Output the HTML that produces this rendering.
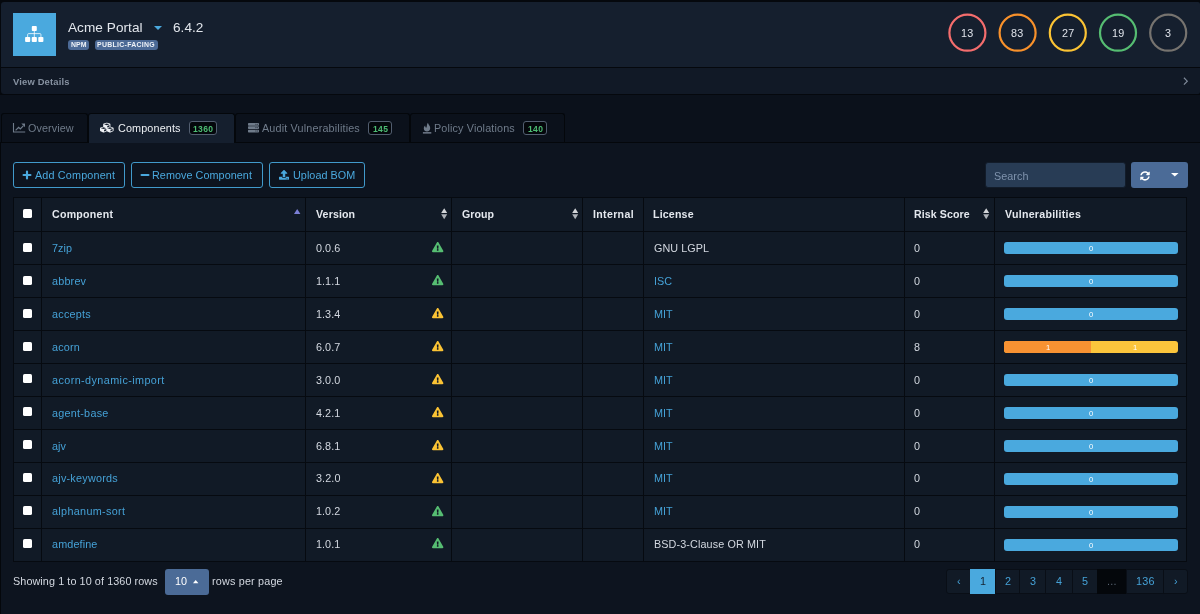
<!DOCTYPE html>
<html lang="en">
<head>
<meta charset="utf-8">
<title>Acme Portal - Components</title>
<style>
*{box-sizing:border-box;margin:0;padding:0}
html,body{width:1200px;height:614px;overflow:hidden}
body{background:#0b111b;font-family:"Liberation Sans",sans-serif;color:#d3d8e0;font-size:10.8px;position:relative}
.abs,.tx,.bx{position:absolute}
.tx{white-space:nowrap;display:block;will-change:transform}
svg{position:absolute;overflow:visible}
.tag{position:absolute;top:40px;height:10px;border-radius:3px;background:#4c6a96}
.circ{position:absolute;top:13px;width:38px;height:38px;border-radius:50%;border:2px solid #777}
.tab{position:absolute;top:113px;height:29px;border:1px solid #04070b;border-bottom:0;border-radius:3px 3px 0 0;background:#0b111b}
.tab.act{background:#151f2e;height:30px}
.tbadge{position:absolute;top:121px;height:14px;border:1px solid #525e70;border-radius:3px;background:#04070b}
.btn{position:absolute;top:162px;height:26px;border:1px solid #419acb;border-radius:3px}
.row{position:absolute;left:14px;width:1173px;height:1px;background:#060a10}
.col{position:absolute;top:197px;width:1px;height:365px;background:#060a10}
.cb{position:absolute;left:23px;width:9px;height:9px;background:#fff;border-radius:1.6px}
.bar{position:absolute;left:1004px;width:174px;height:12px;border-radius:3px;background:#4aa9de;overflow:hidden}
.pg{position:absolute;top:569px;height:25px;background:#111a26;border:1px solid #090e16}
</style>
</head>
<body>

<div class="bx" style="left:0;top:0;width:1200px;height:95px;background:#05080d"></div>
<div class="bx" style="left:1px;top:2px;width:1199px;height:65px;background:#151f2e;border-radius:3px 2px 0 0"></div>
<div class="bx" style="left:1px;top:68px;width:1199px;height:26px;background:#111926;border-radius:0 0 2px 3px"></div>
<div class="bx" style="left:13px;top:13px;width:43px;height:43px;background:#4aa9de"></div>
<svg style="left:0;top:0" width="60" height="60" viewBox="0 0 60 60">
<g fill="#fff"><rect x="31.8" y="26" width="5" height="5" rx=".9"/><rect x="25.1" y="36.9" width="5.1" height="5.1" rx=".9"/><rect x="31.75" y="36.9" width="5.1" height="5.1" rx=".9"/><rect x="38.3" y="36.9" width="5.1" height="5.1" rx=".9"/></g>
<path d="M34.3 31v6M27.65 37v-2.400q0-1 1-1h11.300q1 0 1 1v2.400" fill="none" stroke="#fff" stroke-opacity=".85" stroke-width=".9"/>
</svg>
<span class="tx" style="left:68.00px;top:19px;font-size:13.6px;line-height:17px;letter-spacing:0.05px;color:#e2e6ec;">Acme Portal</span>
<div class="bx" style="left:153.600px;top:25.500px;width:0;height:0;border-left:4.200px solid transparent;border-right:4.200px solid transparent;border-top:4.800px solid #4aa9de"></div>
<span class="tx" style="left:173.00px;top:19px;font-size:13.6px;line-height:17px;letter-spacing:0.05px;color:#e2e6ec;">6.4.2</span>
<div class="tag" style="left:68px;width:21px"></div>
<div class="tag" style="left:95px;width:63px"></div>
<span class="tx" style="left:71.00px;top:40px;font-size:6.9px;line-height:10.4px;letter-spacing:0.134px;font-weight:bold;color:#eef2f7;">NPM</span>
<span class="tx" style="left:97.40px;top:40px;font-size:6.9px;line-height:10.4px;letter-spacing:0.313px;font-weight:bold;color:#eef2f7;">PUBLIC-FACING</span>
<svg style="left:0;top:0" width="1200" height="60"><circle cx="967.4" cy="32.700" r="18" fill="none" stroke="#f46d6d" stroke-width="2.200"/></svg>
<span class="tx" style="left:961.19px;top:26px;font-size:10.8px;line-height:14px;letter-spacing:0.2px;color:#dfe3ea;">13</span>
<svg style="left:0;top:0" width="1200" height="60"><circle cx="1017.6" cy="32.700" r="18" fill="none" stroke="#f8912b" stroke-width="2.200"/></svg>
<span class="tx" style="left:1011.39px;top:26px;font-size:10.8px;line-height:14px;letter-spacing:0.2px;color:#dfe3ea;">83</span>
<svg style="left:0;top:0" width="1200" height="60"><circle cx="1067.8" cy="32.700" r="18" fill="none" stroke="#fbc334" stroke-width="2.200"/></svg>
<span class="tx" style="left:1061.59px;top:26px;font-size:10.8px;line-height:14px;letter-spacing:0.2px;color:#dfe3ea;">27</span>
<svg style="left:0;top:0" width="1200" height="60"><circle cx="1118.0" cy="32.700" r="18" fill="none" stroke="#56bd72" stroke-width="2.200"/></svg>
<span class="tx" style="left:1111.79px;top:26px;font-size:10.8px;line-height:14px;letter-spacing:0.2px;color:#dfe3ea;">19</span>
<svg style="left:0;top:0" width="1200" height="60"><circle cx="1168.2" cy="32.700" r="18" fill="none" stroke="#76736f" stroke-width="2.200"/></svg>
<span class="tx" style="left:1165.10px;top:26px;font-size:10.8px;line-height:14px;letter-spacing:0.05px;color:#dfe3ea;">3</span>
<span class="tx" style="left:13.40px;top:75px;font-size:9.4px;line-height:13px;letter-spacing:0.174px;font-weight:bold;color:#8792a1;">View Details</span>
<svg style="left:1182.800px;top:77.400px" width="5.600" height="8.400" viewBox="0 0 6 9"><path d="M1 0.800 L4.600 4.500 L1 8.200" fill="none" stroke="#7f8a99" stroke-width="1.250"/></svg>
<div class="bx" style="left:0;top:142px;width:1200px;height:1px;background:#04070b"></div>
<div class="bx" style="left:0;top:143px;width:1200px;height:471px;background:#0d141f"></div>
<div class="bx" style="left:0;top:143px;width:1px;height:471px;background:#04070b"></div>
<div class="tab" style="left:1px;width:87px"></div>
<div class="tab act" style="left:88px;width:147px"></div>
<div class="tab" style="left:235px;width:175px"></div>
<div class="tab" style="left:410px;width:155px"></div>
<svg style="left:0;top:0" width="40" height="140" viewBox="0 0 40 140"><path d="M13.500 123v9h11.700" fill="none" stroke="#6f7b8a" stroke-width="1.100"/><path d="M15.600 130.300l3-3 1.700 1.700 3-3.200" fill="none" stroke="#6f7b8a" stroke-width="1.200"/><path d="M21.300 123.500h3.700v3.700z" fill="#6f7b8a"/></svg>
<span class="tx" style="left:28.40px;top:121px;font-size:10.8px;line-height:14px;letter-spacing:0.084px;color:#6f7b8a;">Overview</span>
<span class="tx" style="left:117.50px;top:121px;font-size:10.8px;line-height:14px;letter-spacing:0.141px;color:#eef1f5;">Components</span>
<span class="tx" style="left:262.20px;top:121px;font-size:10.8px;line-height:14px;letter-spacing:0.167px;color:#6f7b8a;">Audit Vulnerabilities</span>
<span class="tx" style="left:434.30px;top:121px;font-size:10.8px;line-height:14px;letter-spacing:0.141px;color:#6f7b8a;">Policy Violations</span>
<div class="tbadge" style="left:189px;width:28px"></div>
<span class="tx" style="left:192.98px;top:122.6px;font-size:8.5px;line-height:12.6px;letter-spacing:0.376px;font-weight:bold;color:#4dbd74;">1360</span>
<div class="tbadge" style="left:368px;width:24px"></div>
<span class="tx" style="left:372.54px;top:122.6px;font-size:8.5px;line-height:12.6px;letter-spacing:0.367px;font-weight:bold;color:#4dbd74;">145</span>
<div class="tbadge" style="left:523px;width:24px"></div>
<span class="tx" style="left:527.54px;top:122.6px;font-size:8.5px;line-height:12.6px;letter-spacing:0.367px;font-weight:bold;color:#4dbd74;">140</span>
<svg style="left:100px;top:122.400px" width="13.600" height="11.200" viewBox="0 0 512 512" preserveAspectRatio="none"><path fill="#eef1f5" d="M488.600 250.200L392 214V105.500c0-15-9.300-28.400-23.400-33.700l-100-37.500c-8.100-3.100-17.100-3.100-25.300 0l-100 37.500c-14.100 5.300-23.400 18.700-23.400 33.700V214l-96.600 36.200C9.300 255.500 0 268.900 0 283.900V394c0 13.600 7.700 26.100 19.900 32.200l100 50c10.100 5.100 22.100 5.100 32.200 0l103.900-52 103.900 52c10.100 5.100 22.100 5.100 32.200 0l100-50c12.200-6.100 19.900-18.600 19.900-32.200V283.900c0-15-9.300-28.400-23.400-33.700zM358 214.800l-85 31.900v-68.200l85-37v73.300zM154 104.100l102-38.200 102 38.200v.6l-102 41.400-102-41.400v-.6zm84 291.100l-85 42.500v-79.100l85-38.800v75.400zm0-112l-102 41.400-102-41.400v-.6l102-38.200 102 38.200v.6zm240 112l-85 42.500v-79.100l85-38.800v75.400zm0-112l-102 41.400-102-41.400v-.6l102-38.200 102 38.200v.6z"/></svg>
<svg style="left:248px;top:123px" width="11" height="9.400" viewBox="0 0 512 448" preserveAspectRatio="none"><path fill="#6f7b8a" d="M480 128H32c-17.670 0-32-14.330-32-32V32C0 14.330 14.330 0 32 0h448c17.670 0 32 14.330 32 32v64c0 17.670-14.330 32-32 32zm-48-88c-13.250 0-24 10.740-24 24 0 13.250 10.750 24 24 24s24-10.750 24-24c0-13.260-10.750-24-24-24zm-64 0c-13.250 0-24 10.740-24 24 0 13.250 10.750 24 24 24s24-10.750 24-24c0-13.260-10.750-24-24-24zm112 248H32c-17.670 0-32-14.330-32-32v-64c0-17.670 14.330-32 32-32h448c17.670 0 32 14.330 32 32v64c0 17.670-14.330 32-32 32zm-48-88c-13.250 0-24 10.740-24 24 0 13.250 10.750 24 24 24s24-10.750 24-24c0-13.260-10.750-24-24-24zm-64 0c-13.250 0-24 10.740-24 24 0 13.250 10.750 24 24 24s24-10.750 24-24c0-13.260-10.750-24-24-24zm112 248H32c-17.670 0-32-14.330-32-32v-64c0-17.670 14.330-32 32-32h448c17.670 0 32 14.330 32 32v64c0 17.670-14.330 32-32 32zm-48-88c-13.250 0-24 10.740-24 24 0 13.250 10.750 24 24 24s24-10.750 24-24c0-13.260-10.750-24-24-24zm-64 0c-13.250 0-24 10.740-24 24 0 13.250 10.750 24 24 24s24-10.750 24-24c0-13.260-10.750-24-24-24z"/></svg>
<svg style="left:0;top:0" width="440" height="140" viewBox="0 0 440 140"><path fill="#6f7b8a" d="M427.900 122.800c.500 2.100 2.600 3.300 2.300 5.700c-.200 1.800-1.500 3-3.200 3c-1.800 0-3.200-1.300-3.200-3.100c0-1.200.600-2.100 1.400-2.900c0 1.100.300 1.900 1.100 2.200c1-1.200.200-3.300 1.600-4.900z"/><rect x="422.900" y="132.100" width="8.400" height="1.500" fill="#6f7b8a"/></svg>
<div class="btn" style="left:13px;width:112px"></div>
<div class="btn" style="left:131px;width:132px"></div>
<div class="btn" style="left:269px;width:96px"></div>
<svg style="left:23px;top:170.800px" width="8" height="8" viewBox="0 0 10 10"><path d="M5 0.700v8.600M0.700 5h8.600" stroke="#4aa9de" stroke-width="2.700" stroke-linecap="round"/></svg>
<span class="tx" style="left:34.60px;top:168px;font-size:10.8px;line-height:14px;letter-spacing:0.162px;color:#4aa9de;">Add Component</span>
<svg style="left:140.800px;top:170.800px" width="8" height="8" viewBox="0 0 10 10"><path d="M0.700 5h8.600" stroke="#4aa9de" stroke-width="2.700" stroke-linecap="round"/></svg>
<span class="tx" style="left:152.40px;top:168px;font-size:10.8px;line-height:14px;letter-spacing:0.057px;color:#4aa9de;">Remove Component</span>
<svg style="left:279px;top:170px" width="10" height="9.800" viewBox="0 0 512 512" preserveAspectRatio="none"><path fill="#4aa9de" d="M296 384h-80c-13.300 0-24-10.700-24-24V192h-87.700c-17.800 0-26.700-21.500-14.100-34.100L242.300 5.700c7.500-7.500 19.800-7.500 27.300 0l152.200 152.200c12.600 12.600 3.700 34.100-14.100 34.100H320v168c0 13.300-10.700 24-24 24zm216-8v112c0 13.300-10.700 24-24 24H24c-13.300 0-24-10.700-24-24V376c0-13.300 10.700-24 24-24h136v8c0 30.900 25.100 56 56 56h80c30.900 0 56-25.100 56-56v-8h136c13.300 0 24 10.700 24 24zm-124 88c0-11-9-20-20-20s-20 9-20 20 9 20 20 20 20-9 20-20zm64 0c0-11-9-20-20-20s-20 9-20 20 9 20 20 20 20-9 20-20z"/></svg>
<span class="tx" style="left:292.70px;top:168px;font-size:10.8px;line-height:14px;letter-spacing:0.05px;color:#4aa9de;">Upload BOM</span>
<div class="bx" style="left:985px;top:162px;width:141px;height:26px;background:#283c55;border:1px solid #121c2a;border-radius:3px"></div>
<span class="tx" style="left:994.30px;top:169px;font-size:10.8px;line-height:14px;letter-spacing:0.05px;color:#7f93ad;">Search</span>
<div class="bx" style="left:1131px;top:162px;width:57px;height:26px;background:#4b6b97;border-radius:3px"></div>
<svg style="left:1140.200px;top:170.600px" width="10" height="9.800" viewBox="0 0 512 512"><path fill="#fff" d="M370.720 133.280C339.458 104.008 298.888 87.962 255.848 88c-77.458.068-144.328 53.178-162.791 126.850-1.344 5.363-6.122 9.150-11.651 9.150H24.103c-7.498 0-13.194-6.807-11.807-14.176C33.933 94.924 134.813 8 256 8c66.448 0 126.791 26.136 171.315 68.685L463.030 40.970C478.149 25.851 504 36.559 504 57.941V192c0 13.255-10.745 24-24 24H345.941c-21.382 0-32.090-25.851-16.971-40.971l41.750-41.749zM32 296h134.059c21.382 0 32.090 25.851 16.971 40.971l-41.750 41.750c31.262 29.273 71.835 45.319 114.876 45.280 77.418-.07 144.315-53.144 162.787-126.849 1.344-5.363 6.122-9.150 11.651-9.150h57.304c7.498 0 13.194 6.807 11.807 14.176C478.067 417.076 377.187 504 256 504c-66.448 0-126.791-26.136-171.315-68.685L48.970 471.030C33.851 486.149 8 475.441 8 454.059V320c0-13.255 10.745-24 24-24z"/></svg>
<svg style="left:1170.800px;top:173px" width="7.600" height="3.600" viewBox="0 0 76 36"><path d="M0 0H76L38 36Z" fill="#fff"/></svg>
<div class="bx" style="left:13px;top:197px;width:1174px;height:365px;background:#111a26"></div>
<div class="row" style="top:197px;left:13px;width:1174px"></div>
<div class="row" style="top:231px;left:13px;width:1174px"></div>
<div class="row" style="top:264px;left:13px;width:1174px"></div>
<div class="row" style="top:297px;left:13px;width:1174px"></div>
<div class="row" style="top:330px;left:13px;width:1174px"></div>
<div class="row" style="top:363px;left:13px;width:1174px"></div>
<div class="row" style="top:396px;left:13px;width:1174px"></div>
<div class="row" style="top:429px;left:13px;width:1174px"></div>
<div class="row" style="top:462px;left:13px;width:1174px"></div>
<div class="row" style="top:495px;left:13px;width:1174px"></div>
<div class="row" style="top:528px;left:13px;width:1174px"></div>
<div class="row" style="top:561px;left:13px;width:1174px"></div>
<div class="col" style="left:13px"></div>
<div class="col" style="left:41px"></div>
<div class="col" style="left:305px"></div>
<div class="col" style="left:451px"></div>
<div class="col" style="left:582px"></div>
<div class="col" style="left:643px"></div>
<div class="col" style="left:904px"></div>
<div class="col" style="left:994px"></div>
<div class="col" style="left:1186px"></div>
<span class="tx" style="left:52.00px;top:207px;font-size:10.6px;line-height:14px;letter-spacing:0.265px;font-weight:bold;color:#e4e8ee;">Component</span>
<span class="tx" style="left:315.50px;top:207px;font-size:10.6px;line-height:14px;letter-spacing:0.134px;font-weight:bold;color:#e4e8ee;">Version</span>
<span class="tx" style="left:461.70px;top:207px;font-size:10.6px;line-height:14px;letter-spacing:0.051px;font-weight:bold;color:#e4e8ee;">Group</span>
<span class="tx" style="left:592.70px;top:207px;font-size:10.6px;line-height:14px;letter-spacing:0.331px;font-weight:bold;color:#e4e8ee;">Internal</span>
<span class="tx" style="left:653.40px;top:207px;font-size:10.6px;line-height:14px;letter-spacing:0.187px;font-weight:bold;color:#e4e8ee;">License</span>
<span class="tx" style="left:914.30px;top:207px;font-size:10.6px;line-height:14px;letter-spacing:0.1px;font-weight:bold;color:#e4e8ee;">Risk Score</span>
<span class="tx" style="left:1004.70px;top:207px;font-size:10.6px;line-height:14px;letter-spacing:0.274px;font-weight:bold;color:#e4e8ee;">Vulnerabilities</span>
<div class="cb" style="top:209px"></div>
<svg style="left:294.400px;top:208.600px" width="6.400" height="5" viewBox="0 0 64 50"><path d="M0 50L32 0L64 50Z" fill="#7b7fd6"/></svg>
<svg style="left:440.6px;top:208px" width="6.400" height="11.400" viewBox="0 0 64 114"><path d="M2 50L32 2L62 50Z" fill="#d2d4d8"/><path d="M2 63L32 112L62 63Z" fill="#aeb2b8"/></svg>
<svg style="left:571.8px;top:208px" width="6.400" height="11.400" viewBox="0 0 64 114"><path d="M2 50L32 2L62 50Z" fill="#d2d4d8"/><path d="M2 63L32 112L62 63Z" fill="#aeb2b8"/></svg>
<svg style="left:983.4px;top:208px" width="6.400" height="11.400" viewBox="0 0 64 114"><path d="M2 50L32 2L62 50Z" fill="#d2d4d8"/><path d="M2 63L32 112L62 63Z" fill="#aeb2b8"/></svg>
<div class="cb" style="top:243px"></div>
<span class="tx" style="left:52.00px;top:241px;font-size:10.8px;line-height:14px;letter-spacing:0.063px;color:#45a1d6;">7zip</span>
<span class="tx" style="left:315.60px;top:241px;font-size:10.8px;line-height:14px;letter-spacing:0.05px;color:#d3d8e0;">0.0.6</span>
<svg style="left:432px;top:242.3px" width="11.400" height="10.200" viewBox="0 0 576 512" preserveAspectRatio="none"><path fill="#56bd72" d="M569.517 440.013C587.975 472.007 564.806 512 527.940 512H48.054c-36.937 0-59.999-40.055-41.577-71.987L246.423 23.985c18.467-32.009 64.720-31.951 83.154 0l239.940 416.028zM288 354c-25.405 0-46 20.595-46 46s20.595 46 46 46 46-20.595 46-46-20.595-46-46-46zm-43.673-165.346l7.418 136c.347 6.364 5.609 11.346 11.982 11.346h48.546c6.373 0 11.635-4.982 11.982-11.346l7.418-136c.375-6.874-5.098-12.654-11.982-12.654h-63.383c-6.884 0-12.356 5.780-11.981 12.654z"/></svg>
<span class="tx" style="left:653.50px;top:241px;font-size:10.8px;line-height:14px;letter-spacing:0.05px;color:#d3d8e0;">GNU LGPL</span>
<span class="tx" style="left:914.30px;top:241px;font-size:10.8px;line-height:14px;letter-spacing:0.05px;color:#d3d8e0;">0</span>
<div class="bar" style="top:242px"></div>
<span class="tx" style="left:1088.60px;top:242.7px;font-size:7.6px;line-height:12px;letter-spacing:0.05px;color:#fff;">0</span>
<div class="cb" style="top:276px"></div>
<span class="tx" style="left:52.00px;top:274px;font-size:10.8px;line-height:14px;letter-spacing:0.196px;color:#45a1d6;">abbrev</span>
<span class="tx" style="left:315.60px;top:274px;font-size:10.8px;line-height:14px;letter-spacing:0.05px;color:#d3d8e0;">1.1.1</span>
<svg style="left:432px;top:275.2px" width="11.400" height="10.200" viewBox="0 0 576 512" preserveAspectRatio="none"><path fill="#56bd72" d="M569.517 440.013C587.975 472.007 564.806 512 527.940 512H48.054c-36.937 0-59.999-40.055-41.577-71.987L246.423 23.985c18.467-32.009 64.720-31.951 83.154 0l239.940 416.028zM288 354c-25.405 0-46 20.595-46 46s20.595 46 46 46 46-20.595 46-46-20.595-46-46-46zm-43.673-165.346l7.418 136c.347 6.364 5.609 11.346 11.982 11.346h48.546c6.373 0 11.635-4.982 11.982-11.346l7.418-136c.375-6.874-5.098-12.654-11.982-12.654h-63.383c-6.884 0-12.356 5.780-11.981 12.654z"/></svg>
<span class="tx" style="left:653.50px;top:274px;font-size:10.8px;line-height:14px;letter-spacing:0.05px;color:#45a1d6;">ISC</span>
<span class="tx" style="left:914.30px;top:274px;font-size:10.8px;line-height:14px;letter-spacing:0.05px;color:#d3d8e0;">0</span>
<div class="bar" style="top:275px"></div>
<span class="tx" style="left:1088.60px;top:275.7px;font-size:7.6px;line-height:12px;letter-spacing:0.05px;color:#fff;">0</span>
<div class="cb" style="top:309px"></div>
<span class="tx" style="left:52.00px;top:307px;font-size:10.8px;line-height:14px;letter-spacing:0.247px;color:#45a1d6;">accepts</span>
<span class="tx" style="left:315.60px;top:307px;font-size:10.8px;line-height:14px;letter-spacing:0.05px;color:#d3d8e0;">1.3.4</span>
<svg style="left:432px;top:308.1px" width="11.400" height="10.200" viewBox="0 0 576 512" preserveAspectRatio="none"><path fill="#fbc334" d="M569.517 440.013C587.975 472.007 564.806 512 527.940 512H48.054c-36.937 0-59.999-40.055-41.577-71.987L246.423 23.985c18.467-32.009 64.720-31.951 83.154 0l239.940 416.028zM288 354c-25.405 0-46 20.595-46 46s20.595 46 46 46 46-20.595 46-46-20.595-46-46-46zm-43.673-165.346l7.418 136c.347 6.364 5.609 11.346 11.982 11.346h48.546c6.373 0 11.635-4.982 11.982-11.346l7.418-136c.375-6.874-5.098-12.654-11.982-12.654h-63.383c-6.884 0-12.356 5.780-11.981 12.654z"/></svg>
<span class="tx" style="left:653.50px;top:307px;font-size:10.8px;line-height:14px;letter-spacing:0.05px;color:#45a1d6;">MIT</span>
<span class="tx" style="left:914.30px;top:307px;font-size:10.8px;line-height:14px;letter-spacing:0.05px;color:#d3d8e0;">0</span>
<div class="bar" style="top:308px"></div>
<span class="tx" style="left:1088.60px;top:308.7px;font-size:7.6px;line-height:12px;letter-spacing:0.05px;color:#fff;">0</span>
<div class="cb" style="top:342px"></div>
<span class="tx" style="left:52.00px;top:340px;font-size:10.8px;line-height:14px;letter-spacing:0.171px;color:#45a1d6;">acorn</span>
<span class="tx" style="left:315.60px;top:340px;font-size:10.8px;line-height:14px;letter-spacing:0.05px;color:#d3d8e0;">6.0.7</span>
<svg style="left:432px;top:341.0px" width="11.400" height="10.200" viewBox="0 0 576 512" preserveAspectRatio="none"><path fill="#fbc334" d="M569.517 440.013C587.975 472.007 564.806 512 527.940 512H48.054c-36.937 0-59.999-40.055-41.577-71.987L246.423 23.985c18.467-32.009 64.720-31.951 83.154 0l239.940 416.028zM288 354c-25.405 0-46 20.595-46 46s20.595 46 46 46 46-20.595 46-46-20.595-46-46-46zm-43.673-165.346l7.418 136c.347 6.364 5.609 11.346 11.982 11.346h48.546c6.373 0 11.635-4.982 11.982-11.346l7.418-136c.375-6.874-5.098-12.654-11.982-12.654h-63.383c-6.884 0-12.356 5.780-11.981 12.654z"/></svg>
<span class="tx" style="left:653.50px;top:340px;font-size:10.8px;line-height:14px;letter-spacing:0.05px;color:#45a1d6;">MIT</span>
<span class="tx" style="left:914.30px;top:340px;font-size:10.8px;line-height:14px;letter-spacing:0.05px;color:#d3d8e0;">8</span>
<div class="bar" style="top:341px;background:#fbc53c"><div class="bx" style="left:0;top:0;width:87px;height:12px;background:#f89232"></div></div>
<span class="tx" style="left:1046.00px;top:341.7px;font-size:7.6px;line-height:12px;letter-spacing:0.05px;color:#fff;">1</span>
<span class="tx" style="left:1132.60px;top:341.7px;font-size:7.6px;line-height:12px;letter-spacing:0.05px;color:#fff;">1</span>
<div class="cb" style="top:374px"></div>
<span class="tx" style="left:52.00px;top:373px;font-size:10.8px;line-height:14px;letter-spacing:0.414px;color:#45a1d6;">acorn-dynamic-import</span>
<span class="tx" style="left:315.60px;top:373px;font-size:10.8px;line-height:14px;letter-spacing:0.05px;color:#d3d8e0;">3.0.0</span>
<svg style="left:432px;top:373.9px" width="11.400" height="10.200" viewBox="0 0 576 512" preserveAspectRatio="none"><path fill="#fbc334" d="M569.517 440.013C587.975 472.007 564.806 512 527.940 512H48.054c-36.937 0-59.999-40.055-41.577-71.987L246.423 23.985c18.467-32.009 64.720-31.951 83.154 0l239.940 416.028zM288 354c-25.405 0-46 20.595-46 46s20.595 46 46 46 46-20.595 46-46-20.595-46-46-46zm-43.673-165.346l7.418 136c.347 6.364 5.609 11.346 11.982 11.346h48.546c6.373 0 11.635-4.982 11.982-11.346l7.418-136c.375-6.874-5.098-12.654-11.982-12.654h-63.383c-6.884 0-12.356 5.780-11.981 12.654z"/></svg>
<span class="tx" style="left:653.50px;top:373px;font-size:10.8px;line-height:14px;letter-spacing:0.05px;color:#45a1d6;">MIT</span>
<span class="tx" style="left:914.30px;top:373px;font-size:10.8px;line-height:14px;letter-spacing:0.05px;color:#d3d8e0;">0</span>
<div class="bar" style="top:374px"></div>
<span class="tx" style="left:1088.60px;top:374.7px;font-size:7.6px;line-height:12px;letter-spacing:0.05px;color:#fff;">0</span>
<div class="cb" style="top:407px"></div>
<span class="tx" style="left:52.00px;top:406px;font-size:10.8px;line-height:14px;letter-spacing:0.251px;color:#45a1d6;">agent-base</span>
<span class="tx" style="left:315.60px;top:406px;font-size:10.8px;line-height:14px;letter-spacing:0.05px;color:#d3d8e0;">4.2.1</span>
<svg style="left:432px;top:406.8px" width="11.400" height="10.200" viewBox="0 0 576 512" preserveAspectRatio="none"><path fill="#fbc334" d="M569.517 440.013C587.975 472.007 564.806 512 527.940 512H48.054c-36.937 0-59.999-40.055-41.577-71.987L246.423 23.985c18.467-32.009 64.720-31.951 83.154 0l239.940 416.028zM288 354c-25.405 0-46 20.595-46 46s20.595 46 46 46 46-20.595 46-46-20.595-46-46-46zm-43.673-165.346l7.418 136c.347 6.364 5.609 11.346 11.982 11.346h48.546c6.373 0 11.635-4.982 11.982-11.346l7.418-136c.375-6.874-5.098-12.654-11.982-12.654h-63.383c-6.884 0-12.356 5.780-11.981 12.654z"/></svg>
<span class="tx" style="left:653.50px;top:406px;font-size:10.8px;line-height:14px;letter-spacing:0.05px;color:#45a1d6;">MIT</span>
<span class="tx" style="left:914.30px;top:406px;font-size:10.8px;line-height:14px;letter-spacing:0.05px;color:#d3d8e0;">0</span>
<div class="bar" style="top:407px"></div>
<span class="tx" style="left:1088.60px;top:407.7px;font-size:7.6px;line-height:12px;letter-spacing:0.05px;color:#fff;">0</span>
<div class="cb" style="top:440px"></div>
<span class="tx" style="left:52.00px;top:439px;font-size:10.8px;line-height:14px;letter-spacing:0.05px;color:#45a1d6;">ajv</span>
<span class="tx" style="left:315.60px;top:439px;font-size:10.8px;line-height:14px;letter-spacing:0.05px;color:#d3d8e0;">6.8.1</span>
<svg style="left:432px;top:439.7px" width="11.400" height="10.200" viewBox="0 0 576 512" preserveAspectRatio="none"><path fill="#fbc334" d="M569.517 440.013C587.975 472.007 564.806 512 527.940 512H48.054c-36.937 0-59.999-40.055-41.577-71.987L246.423 23.985c18.467-32.009 64.720-31.951 83.154 0l239.940 416.028zM288 354c-25.405 0-46 20.595-46 46s20.595 46 46 46 46-20.595 46-46-20.595-46-46-46zm-43.673-165.346l7.418 136c.347 6.364 5.609 11.346 11.982 11.346h48.546c6.373 0 11.635-4.982 11.982-11.346l7.418-136c.375-6.874-5.098-12.654-11.982-12.654h-63.383c-6.884 0-12.356 5.780-11.981 12.654z"/></svg>
<span class="tx" style="left:653.50px;top:439px;font-size:10.8px;line-height:14px;letter-spacing:0.05px;color:#45a1d6;">MIT</span>
<span class="tx" style="left:914.30px;top:439px;font-size:10.8px;line-height:14px;letter-spacing:0.05px;color:#d3d8e0;">0</span>
<div class="bar" style="top:440px"></div>
<span class="tx" style="left:1088.60px;top:440.7px;font-size:7.6px;line-height:12px;letter-spacing:0.05px;color:#fff;">0</span>
<div class="cb" style="top:473px"></div>
<span class="tx" style="left:52.00px;top:471px;font-size:10.8px;line-height:14px;letter-spacing:0.244px;color:#45a1d6;">ajv-keywords</span>
<span class="tx" style="left:315.60px;top:471px;font-size:10.8px;line-height:14px;letter-spacing:0.095px;color:#d3d8e0;">3.2.0</span>
<svg style="left:432px;top:472.6px" width="11.400" height="10.200" viewBox="0 0 576 512" preserveAspectRatio="none"><path fill="#fbc334" d="M569.517 440.013C587.975 472.007 564.806 512 527.940 512H48.054c-36.937 0-59.999-40.055-41.577-71.987L246.423 23.985c18.467-32.009 64.720-31.951 83.154 0l239.940 416.028zM288 354c-25.405 0-46 20.595-46 46s20.595 46 46 46 46-20.595 46-46-20.595-46-46-46zm-43.673-165.346l7.418 136c.347 6.364 5.609 11.346 11.982 11.346h48.546c6.373 0 11.635-4.982 11.982-11.346l7.418-136c.375-6.874-5.098-12.654-11.982-12.654h-63.383c-6.884 0-12.356 5.780-11.981 12.654z"/></svg>
<span class="tx" style="left:653.50px;top:471px;font-size:10.8px;line-height:14px;letter-spacing:0.05px;color:#45a1d6;">MIT</span>
<span class="tx" style="left:914.30px;top:471px;font-size:10.8px;line-height:14px;letter-spacing:0.05px;color:#d3d8e0;">0</span>
<div class="bar" style="top:473px"></div>
<span class="tx" style="left:1088.60px;top:473.7px;font-size:7.6px;line-height:12px;letter-spacing:0.05px;color:#fff;">0</span>
<div class="cb" style="top:506px"></div>
<span class="tx" style="left:52.00px;top:504px;font-size:10.8px;line-height:14px;letter-spacing:0.33px;color:#45a1d6;">alphanum-sort</span>
<span class="tx" style="left:315.60px;top:504px;font-size:10.8px;line-height:14px;letter-spacing:0.05px;color:#d3d8e0;">1.0.2</span>
<svg style="left:432px;top:505.5px" width="11.400" height="10.200" viewBox="0 0 576 512" preserveAspectRatio="none"><path fill="#56bd72" d="M569.517 440.013C587.975 472.007 564.806 512 527.940 512H48.054c-36.937 0-59.999-40.055-41.577-71.987L246.423 23.985c18.467-32.009 64.720-31.951 83.154 0l239.940 416.028zM288 354c-25.405 0-46 20.595-46 46s20.595 46 46 46 46-20.595 46-46-20.595-46-46-46zm-43.673-165.346l7.418 136c.347 6.364 5.609 11.346 11.982 11.346h48.546c6.373 0 11.635-4.982 11.982-11.346l7.418-136c.375-6.874-5.098-12.654-11.982-12.654h-63.383c-6.884 0-12.356 5.780-11.981 12.654z"/></svg>
<span class="tx" style="left:653.50px;top:504px;font-size:10.8px;line-height:14px;letter-spacing:0.05px;color:#45a1d6;">MIT</span>
<span class="tx" style="left:914.30px;top:504px;font-size:10.8px;line-height:14px;letter-spacing:0.05px;color:#d3d8e0;">0</span>
<div class="bar" style="top:506px"></div>
<span class="tx" style="left:1088.60px;top:506.7px;font-size:7.6px;line-height:12px;letter-spacing:0.05px;color:#fff;">0</span>
<div class="cb" style="top:539px"></div>
<span class="tx" style="left:52.00px;top:537px;font-size:10.8px;line-height:14px;letter-spacing:0.124px;color:#45a1d6;">amdefine</span>
<span class="tx" style="left:315.60px;top:537px;font-size:10.8px;line-height:14px;letter-spacing:0.05px;color:#d3d8e0;">1.0.1</span>
<svg style="left:432px;top:538.4px" width="11.400" height="10.200" viewBox="0 0 576 512" preserveAspectRatio="none"><path fill="#56bd72" d="M569.517 440.013C587.975 472.007 564.806 512 527.940 512H48.054c-36.937 0-59.999-40.055-41.577-71.987L246.423 23.985c18.467-32.009 64.720-31.951 83.154 0l239.940 416.028zM288 354c-25.405 0-46 20.595-46 46s20.595 46 46 46 46-20.595 46-46-20.595-46-46-46zm-43.673-165.346l7.418 136c.347 6.364 5.609 11.346 11.982 11.346h48.546c6.373 0 11.635-4.982 11.982-11.346l7.418-136c.375-6.874-5.098-12.654-11.982-12.654h-63.383c-6.884 0-12.356 5.780-11.981 12.654z"/></svg>
<span class="tx" style="left:653.50px;top:537px;font-size:10.8px;line-height:14px;letter-spacing:0.11px;color:#d3d8e0;">BSD-3-Clause OR MIT</span>
<span class="tx" style="left:914.30px;top:537px;font-size:10.8px;line-height:14px;letter-spacing:0.05px;color:#d3d8e0;">0</span>
<div class="bar" style="top:539px"></div>
<span class="tx" style="left:1088.60px;top:539.7px;font-size:7.6px;line-height:12px;letter-spacing:0.05px;color:#fff;">0</span>
<span class="tx" style="left:13.30px;top:574px;font-size:10.8px;line-height:14px;letter-spacing:0.089px;color:#d3d8e0;">Showing 1 to 10 of 1360 rows</span>
<div class="bx" style="left:165px;top:569px;width:44px;height:26px;background:#4b6b97;border-radius:3px"></div>
<span class="tx" style="left:175.30px;top:574px;font-size:10.8px;line-height:14px;letter-spacing:0.05px;color:#fff;">10</span>
<svg style="left:193.400px;top:580.200px" width="5.400" height="3.200" viewBox="0 0 54 32"><path d="M0 32H54L27 0Z" fill="#fff"/></svg>
<span class="tx" style="left:211.70px;top:574px;font-size:10.8px;line-height:14px;letter-spacing:0.18px;color:#d3d8e0;">rows per page</span>
<div class="pg" style="left:946px;width:25px;border-radius:3px 0 0 3px;"></div>
<span class="tx" style="left:956.70px;top:574px;font-size:10.8px;line-height:14px;letter-spacing:0.05px;color:#45a1d6;">‹</span>
<div class="pg" style="left:970px;width:26px;background:#4aa9de;border-color:#4aa9de;"></div>
<span class="tx" style="left:980.00px;top:574px;font-size:10.8px;line-height:14px;letter-spacing:0.05px;color:#16222f;">1</span>
<div class="pg" style="left:995px;width:25px;"></div>
<span class="tx" style="left:1004.50px;top:574px;font-size:10.8px;line-height:14px;letter-spacing:0.05px;color:#45a1d6;">2</span>
<div class="pg" style="left:1019px;width:27px;"></div>
<span class="tx" style="left:1029.50px;top:574px;font-size:10.8px;line-height:14px;letter-spacing:0.05px;color:#45a1d6;">3</span>
<div class="pg" style="left:1045px;width:28px;"></div>
<span class="tx" style="left:1056.00px;top:574px;font-size:10.8px;line-height:14px;letter-spacing:0.05px;color:#45a1d6;">4</span>
<div class="pg" style="left:1072px;width:26px;"></div>
<span class="tx" style="left:1082.00px;top:574px;font-size:10.8px;line-height:14px;letter-spacing:0.05px;color:#45a1d6;">5</span>
<div class="pg" style="left:1097px;width:30px;background:#04070b;border-color:#04070b;"></div>
<span class="tx" style="left:1107.25px;top:574px;font-size:10.8px;line-height:14px;letter-spacing:0.25px;color:#5a6573;">...</span>
<div class="pg" style="left:1126px;width:38px;"></div>
<span class="tx" style="left:1135.74px;top:574px;font-size:10.8px;line-height:14px;letter-spacing:0.25px;color:#45a1d6;">136</span>
<div class="pg" style="left:1163px;width:25px;border-radius:0 3px 3px 0;"></div>
<span class="tx" style="left:1173.70px;top:574px;font-size:10.8px;line-height:14px;letter-spacing:0.05px;color:#45a1d6;">›</span>
</body>
</html>
